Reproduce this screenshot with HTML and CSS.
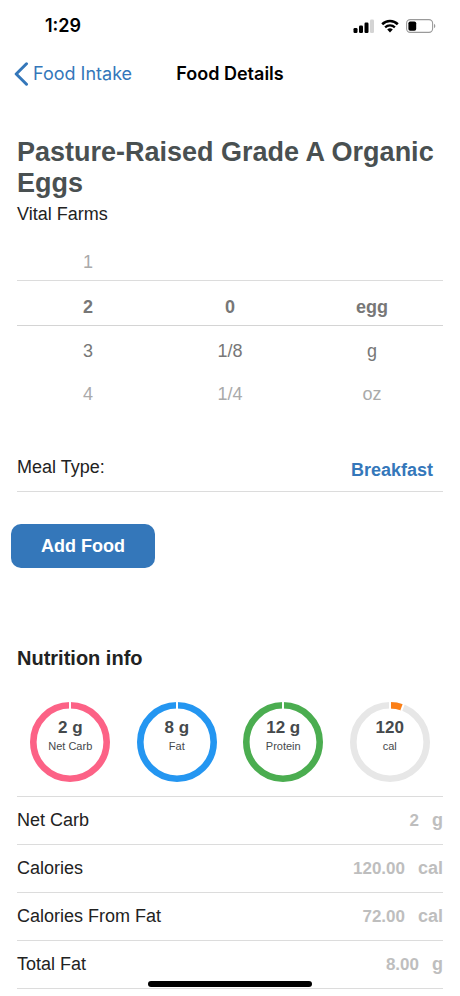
FILE: index.html
```html
<!DOCTYPE html>
<html lang="en">
<head>
    <meta charset="UTF-8">
    <meta name="viewport" content="width=device-width, initial-scale=1.0">
    <title>Food Details</title>
    <link rel="stylesheet" href="styles.css">
</head>
<body>
    <!-- Status bar -->
    <div class="status-bar">
        <span class="time">1:29</span>
        <div class="status-icons">
            <svg width="21" height="14" viewBox="0 0 21 14">
                <rect x="0.5" y="9" width="4" height="5" rx="1.2"/>
                <rect x="6" y="6.5" width="4" height="7.5" rx="1.2"/>
                <rect x="11.5" y="3.5" width="4" height="10.5" rx="1.2"/>
                <rect x="17" y="0.5" width="4" height="13.5" rx="1.2" fill="#d4d4d4"/>
            </svg>
            <svg width="18" height="14" viewBox="0 0 18 14">
                <path d="M1.2 5.2a11.2 11.2 0 0 1 15.6 0" fill="none" stroke="#000" stroke-width="2.6"/>
                <path d="M4.1 8.3a7.1 7.1 0 0 1 9.8 0" fill="none" stroke="#000" stroke-width="2.3"/>
                <path d="M6.2 10.6a4.2 4.2 0 0 1 5.6 0L9 13.5z"/>
            </svg>
            <svg width="30" height="14" viewBox="0 0 30 14">
                <rect x="0.6" y="0.6" width="26" height="12.8" rx="3.6" fill="none" stroke="#9a9a9a" stroke-width="1.1"/>
                <rect x="2.4" y="2.4" width="7.8" height="9.4" rx="1.8"/>
                <path d="M28 4.8c1.8.8 1.8 3.6 0 4.4z" fill="#9a9a9a"/>
            </svg>
        </div>
    </div>

    <!-- Navigation -->
    <header class="nav">
        <a href="#" class="back">
            <svg width="15" height="24" viewBox="0 0 15 24">
                <path d="M12.5 1.8L2.2 12l10.3 10.2" fill="none" stroke="#3477ba" stroke-width="3" stroke-linecap="round" stroke-linejoin="round"/>
            </svg>
            Food Intake
        </a>
        <div class="nav-title">Food Details</div>
    </header>

    <main class="content">
        <h1>Pasture-Raised Grade A Organic Eggs</h1>
        <p class="brand">Vital Farms</p>

        <!-- Serving picker -->
        <div class="picker">
            <div class="wheel" role="radiogroup" aria-label="Amount">
                <label class="option far"><input type="radio" name="amount" value="1"><span>1</span></label>
                <label class="option"><input type="radio" name="amount" value="2" checked><span>2</span></label>
                <label class="option"><input type="radio" name="amount" value="3"><span>3</span></label>
                <label class="option far"><input type="radio" name="amount" value="4"><span>4</span></label>
            </div>
            <div class="wheel" role="radiogroup" aria-label="Fraction">
                <div class="option"></div>
                <label class="option"><input type="radio" name="fraction" value="0" checked><span>0</span></label>
                <label class="option"><input type="radio" name="fraction" value="1/8"><span>1/8</span></label>
                <label class="option far"><input type="radio" name="fraction" value="1/4"><span>1/4</span></label>
            </div>
            <div class="wheel" role="radiogroup" aria-label="Unit">
                <div class="option"></div>
                <label class="option"><input type="radio" name="unit" value="egg" checked><span>egg</span></label>
                <label class="option"><input type="radio" name="unit" value="g"><span>g</span></label>
                <label class="option far"><input type="radio" name="unit" value="oz"><span>oz</span></label>
            </div>
        </div>

        <!-- Meal type -->
        <div class="meal">
            <label for="meal-type">Meal Type:</label>
            <select id="meal-type">
                <option>Breakfast</option>
            </select>
        </div>

        <button type="button" class="add-button">Add Food</button>

        <!-- Nutrition -->
        <h2>Nutrition info</h2>
        <div class="rings">
            <div class="ring">
                <svg viewBox="0 0 80 80">
                    <circle cx="40" cy="40" r="36.7" stroke="#fc6286"/>
                    <path d="M40 0v8" stroke="#fff" stroke-width="2"/>
                </svg>
                <div class="ring-text"><b>2 g</b><span>Net Carb</span></div>
            </div>
            <div class="ring">
                <svg viewBox="0 0 80 80">
                    <circle cx="40" cy="40" r="36.7" stroke="#2496f1"/>
                    <path d="M40 0v8" stroke="#fff" stroke-width="2"/>
                </svg>
                <div class="ring-text"><b>8 g</b><span>Fat</span></div>
            </div>
            <div class="ring">
                <svg viewBox="0 0 80 80">
                    <circle cx="40" cy="40" r="36.7" stroke="#4bad50"/>
                    <path d="M40 0v8" stroke="#fff" stroke-width="2"/>
                </svg>
                <div class="ring-text"><b>12 g</b><span>Protein</span></div>
            </div>
            <div class="ring">
                <svg viewBox="0 0 80 80">
                    <circle cx="40" cy="40" r="36.7" stroke="#e7e7e7"/>
                    <path d="M40 3.3A36.7 36.7 0 0 1 52.5 5.5" stroke="#fb7f17"/>
                    <path d="M40 0v8M54 1.4l-2.8 7.4" stroke="#fff" stroke-width="2"/>
                </svg>
                <div class="ring-text"><b>120</b><span>cal</span></div>
            </div>
        </div>

        <table class="facts">
            <tbody>
                <tr><th scope="row">Net Carb</th><td>2<span class="unit">g</span></td></tr>
                <tr><th scope="row">Calories</th><td>120.00<span class="unit">cal</span></td></tr>
                <tr><th scope="row">Calories From Fat</th><td>72.00<span class="unit">cal</span></td></tr>
                <tr><th scope="row">Total Fat</th><td>8.00<span class="unit">g</span></td></tr>
            </tbody>
        </table>
    </main>

    <div class="home-indicator"></div>
</body>
</html>
```
FILE: styles.css
```css
* {
    box-sizing: border-box;
    margin: 0;
    padding: 0;
}

body {
    font-family: "Liberation Sans", Arial, sans-serif;
    font-size: 18px;
    line-height: 30px;
    color: #222;
    background-color: #fff;
}

.status-bar {
    display: flex;
    align-items: center;
    justify-content: space-between;
    height: 50px;
    padding: 2px 24px 0 45px;
    font-family: Inter, sans-serif;
    font-weight: 600;
    color: #000;
}

.status-icons {
    display: flex;
    gap: 7px;
}

.nav {
    display: grid;
    grid-template-columns: 1fr auto 1fr;
    align-items: center;
    height: 48px;
    padding: 0 14px;
    font-family: Inter, sans-serif;
}

.back {
    display: flex;
    align-items: center;
    gap: 4px;
    color: #3477ba;
    text-decoration: none;
}

.nav-title {
    font-weight: 600;
    color: #000;
}

.content {
    padding: 39px 17px 8px;
}

h1 {
    font-size: 27px;
    line-height: 31px;
    color: #495051;
}

.picker {
    display: grid;
    grid-template-columns: repeat(3, 1fr);
    margin-top: 8px;
}

.option {
    display: block;
    height: 44px;
    padding-top: 10px;
    text-align: center;
    color: #777;
}

.option:nth-child(1) {
    border-bottom: 1px solid #dcdcdc;
}

.option:nth-child(2) {
    padding-top: 11px;
}

.option:nth-child(3) {
    border-top: 1px solid #d4d4d4;
}

.option input {
    position: absolute;
    opacity: 0;
}

.option input:checked + span {
    font-weight: bold;
}

.far {
    color: #aaa;
}

.meal {
    display: flex;
    justify-content: space-between;
    height: 53px;
    margin-top: 26px;
    padding: 13px 9px 0 0;
    border-bottom: 1px solid #dcdcdc;
}

.meal select {
    height: 36px;
    border: none;
    appearance: none;
    background: none;
    font: inherit;
    font-weight: bold;
    color: #3477ba;
}

.add-button {
    display: block;
    height: 44px;
    margin: 32px 0 0 -6px;
    padding: 0 30px;
    border: none;
    border-radius: 10px;
    background-color: #3477ba;
    font: inherit;
    font-weight: bold;
    color: #fff;
}

h2 {
    margin-top: 75px;
    font-size: 20px;
    line-height: 30px;
}

.rings {
    display: grid;
    grid-template-columns: repeat(4, 1fr);
    justify-items: center;
    margin: 29px 0 14px;
}

.ring {
    position: relative;
    width: 80px;
    height: 80px;
}

.ring svg {
    display: block;
    fill: none;
    stroke-width: 6.6;
}

.ring-text {
    position: absolute;
    top: 17px;
    left: 0;
    width: 100%;
    text-align: center;
    color: #45494c;
}

.ring-text b,
.ring-text span {
    display: block;
    font-size: 17px;
    line-height: 18px;
}

.ring-text span {
    font-size: 11px;
}

.facts {
    width: 100%;
    border-collapse: collapse;
    border-top: 1px solid #dcdcdc;
}

.facts tr {
    height: 48px;
    border-bottom: 1px solid #dcdcdc;
}

.facts th {
    padding-bottom: 2px;
    text-align: left;
    font-weight: normal;
}

.facts td {
    text-align: right;
    font-size: 17px;
    font-weight: bold;
    color: #bebebe;
}

.unit {
    margin-left: 13px;
    font-size: 18px;
}

.home-indicator {
    position: fixed;
    bottom: 9px;
    left: 50%;
    width: 164px;
    height: 6px;
    border-radius: 3px;
    background-color: #000;
    transform: translateX(-50%);
}
```
